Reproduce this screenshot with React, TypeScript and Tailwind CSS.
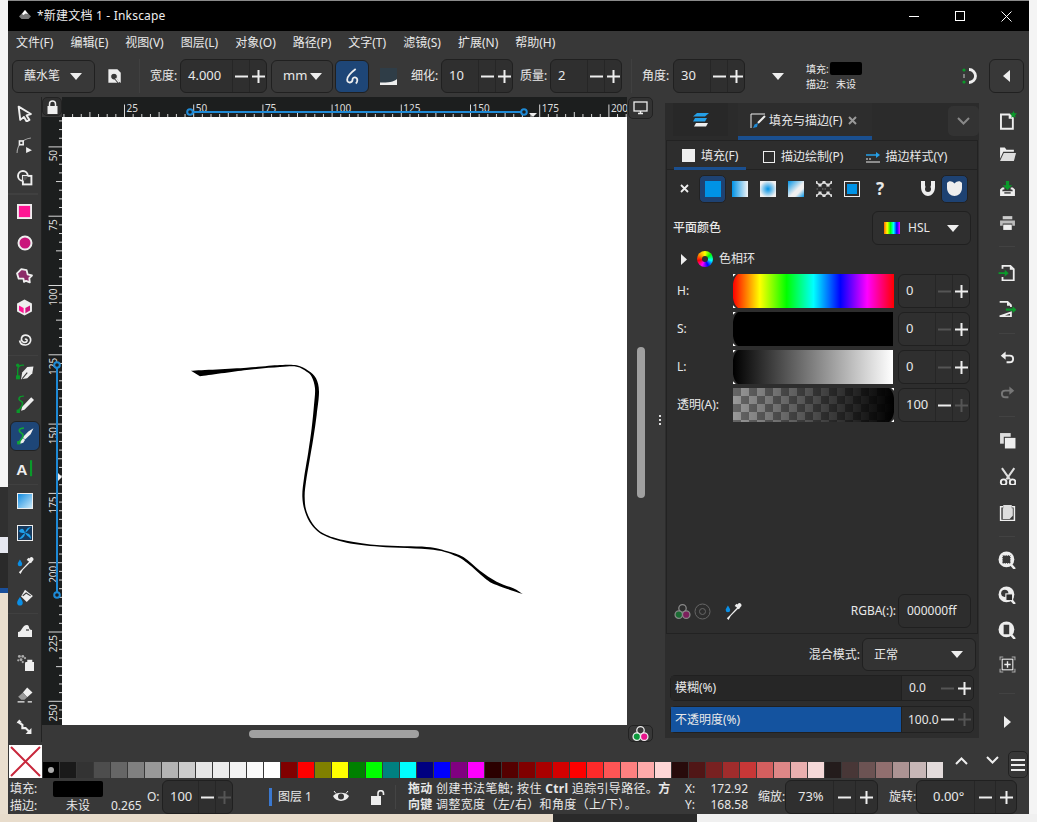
import React from "react";

const W = "#eeeeee";
const G = "#0a9a2a";

function S({ s = 16, children, className = "" }: { s?: number; children: React.ReactNode; className?: string }) {
  return (
    <svg width={s} height={s} viewBox="0 0 16 16" className={`block shrink-0 ${className}`}>
      {children}
    </svg>
  );
}

function Minus({ dim }: { dim?: boolean }) {
  return (
    <svg width="13" height="3" viewBox="0 0 13 3" className="block">
      <rect width="13" height="2" y=".5" fill={dim ? "#555" : W} />
    </svg>
  );
}
function Plus({ dim }: { dim?: boolean }) {
  return (
    <svg width="13" height="13" viewBox="0 0 13 13" className="block">
      <path d="M0 6.5H13M6.5 0V13" stroke={dim ? "#555" : W} strokeWidth="2" />
    </svg>
  );
}
function Tri({ className = "" }: { className?: string }) {
  return (
    <svg width="12" height="7" viewBox="0 0 12 7" className={`block shrink-0 ${className}`}>
      <path d="M0 0H12L6 7Z" fill={W} />
    </svg>
  );
}

function Spin({
  v,
  w,
  h = "h-[34px]",
  btn = "w-[17px]",
  minusDim,
  plusDim,
  ml = "",
  vp = "pl-[7px]",
}: {
  v: string;
  w: string;
  h?: string;
  btn?: string;
  minusDim?: boolean;
  plusDim?: boolean;
  ml?: string;
  vp?: string;
}) {
  return (
    <div className={`flex shrink-0 items-stretch rounded-[6px] border border-[#202020] bg-[#2f2f2f] ${w} ${h} ${ml}`}>
      <div className={`flex flex-1 items-center text-[13px] ${vp}`}>{v}</div>
      <div className={`flex items-center justify-center border-l border-[#262626] ${btn}`}>
        <Minus dim={minusDim} />
      </div>
      <div className={`flex items-center justify-center border-l border-[#262626] ${btn}`}>
        <Plus dim={plusDim} />
      </div>
    </div>
  );
}

function TopRuler() {
  const t: React.ReactNode[] = [];
  for (let i = -7; i <= 58; i++) {
    const x = 124.5 + i * 8.65;
    const major = i % 8 === 0;
    const len = major ? 12.5 : i % 4 === 0 ? 5 : 3;
    t.push(<line key={i} x1={x} x2={x} y1={117 - len} y2={117} stroke="#d8d8d8" strokeWidth="1" />);
    if (major)
      t.push(
        <text key={`t${i}`} x={x + 2} y={111.5} fontSize="10" fill="#dddddd">
          {25 + (i / 8) * 25}
        </text>
      );
  }
  return (
    <svg width="565" height="20" viewBox="62 97 565 20" className="block">
      {t}
      <line x1="190" x2="524" y1="112" y2="112" stroke="#1e8ad6" strokeWidth="2" />
      <circle cx="190" cy="112" r="2.8" fill="#1c1e1e" stroke="#1e8ad6" strokeWidth="2" />
      <circle cx="524" cy="112" r="2.8" fill="#1c1e1e" stroke="#1e8ad6" strokeWidth="2" />
      <path d="M529 113H537L533 117Z" fill="#eee" />
    </svg>
  );
}

function LeftRuler() {
  const t: React.ReactNode[] = [];
  for (let i = -27; i <= 43; i++) {
    const y = 354.8 + i * 8.6625;
    if (y < 118 || y > 725) continue;
    const major = i % 8 === 0;
    const len = major ? 13.5 : i % 4 === 0 ? 6 : 3;
    t.push(<line key={i} y1={y} y2={y} x1={62 - len} x2={62} stroke="#d8d8d8" strokeWidth="1" />);
    if (major)
      t.push(
        <text key={`t${i}`} x="57" y={y + 3} fontSize="10" fill="#dddddd" textAnchor="end" transform={`rotate(-90 57 ${y + 3})`}>
          {125 + (i / 8) * 25}
        </text>
      );
  }
  return (
    <svg width="20" height="608" viewBox="42 117 20 608" className="block shrink-0 bg-[#1c1e1e]">
      {t}
      <line x1="57" x2="57" y1="365" y2="595" stroke="#1e8ad6" strokeWidth="2" />
      <circle cx="57" cy="365" r="2.8" fill="#1c1e1e" stroke="#1e8ad6" strokeWidth="2" />
      <circle cx="57" cy="595" r="2.8" fill="#1c1e1e" stroke="#1e8ad6" strokeWidth="2" />
      <path d="M58 473V481L62 477Z" fill="#eee" />
    </svg>
  );
}

function smooth(p: number[][]) {
  let d = "";
  for (let i = 0; i < p.length - 1; i++) {
    const a = p[Math.max(0, i - 1)],
      b = p[i],
      c = p[i + 1],
      e = p[Math.min(p.length - 1, i + 2)];
    d += ` C${b[0] + (c[0] - a[0]) / 6} ${b[1] + (c[1] - a[1]) / 6} ${c[0] - (e[0] - b[0]) / 6} ${c[1] - (e[1] - b[1]) / 6} ${c[0]} ${c[1]}`;
  }
  return d;
}
const topEdge = [[33,47],[200,38],[300,30],[350,31],[385,47],[408,70],[417,110],[410,180],[400,250],[388,320],[378,380],[374,425],[380,470],[405,515],[440,540],[500,557],[600,571],[740,576],[800,588],[850,606],[900,647],[950,680],[1000,700],[1028,717]];
const botEdge = [[1028,717],[1000,708],[950,690],[920,674],[870,631],[830,604],[760,584],[600,575],[500,563],[430,540],[395,510],[375,470],[367,425],[372,370],[385,290],[395,220],[402,150],[405,100],[395,65],[380,50],[350,35],[300,36],[200,45],[60,64]];
const strokeD = `M33 47${smooth(topEdge)}${smooth(botEdge)}Z`;

const Ic = {
  select: <S s={17}><path d="M2.5 1.5L14 8.5L10 9.8L12.6 14L10 15.5L7.5 11.2L4 14Z" fill="#383838" stroke={W} strokeWidth="1.8" strokeLinejoin="round" /></S>,
  node: <S s={17}><path d="M1 15C1 8 6 2 14 1" stroke="#aaa" fill="none" /><rect x="2.5" y="3" width="5" height="5" fill={W} /><rect x="4" y="4.5" width="2" height="2" fill="#383838" /><path d="M9.5 9.5L15 12.5L9.5 15Z" fill={W} /></S>,
  shape: <S s={17}><circle cx="6.5" cy="6.5" r="4.6" fill="none" stroke={W} strokeWidth="1.8" /><rect x="6.5" y="6.5" width="8" height="8" fill="#383838" stroke={W} strokeWidth="1.8" /><path d="M6.5 11A4.6 4.6 0 0 0 11 6.5H6.5Z" fill="#555" /></S>,
  rect: <S s={15}><rect x="1" y="1" width="14" height="14" fill="#ff1493" stroke={W} strokeWidth="2" /></S>,
  circle: <S s={16}><circle cx="8" cy="8" r="6.5" fill="#c9177b" stroke={W} strokeWidth="2" /></S>,
  star: <S s={17}><path d="M5 2L10 3L11 7L15 8L12.5 10.5L13 14.5L9.5 13L7.5 14L7 11L2.5 11L1 6Z" fill="#8c2c68" stroke={W} strokeWidth="1.7" strokeLinejoin="round" /></S>,
  box: <S s={17}><path d="M8 .5L15 4.3V11.7L8 15.5L1 11.7V4.3Z" fill={W} /><path d="M2.8 6L7.2 8.5V13.3L2.8 10.8Z" fill="#ff1493" /><path d="M13.2 6L8.8 8.5V13.3L13.2 10.8Z" fill="#d01580" /></S>,
  spiral: <S s={16}><path d="M8 8.6c1-1 2.4 0 2 1.3c-.6 1.8-3.6 1.8-4.8.3c-1.6-2-.6-5 1.8-5.8c3-1 6 .8 6.6 3.6c.6 3-1.5 5.8-4.8 6c-3 .2-5.6-1.6-6.2-4.5" fill="none" stroke={W} strokeWidth="1.7" /></S>,
  pen: <S s={18}><path d="M15.5 3L10 3.5L5.5 8.5L4.5 14.5L10 13.5L14.5 9Z" fill={W} /><path d="M5.5 14L10 8.5" stroke="#383838" /><path d="M1.5 13V6C1.5 3 4 1.5 7 2" fill="none" stroke={G} strokeWidth="1.2" /><rect x="0" y="11" width="3.5" height="3.5" fill={G} /><circle cx="1.5" cy="2" r="1.5" fill={G} /></S>,
  pencil: <S s={18}><path d="M13.5 2L16 4.5L7.5 13L4.5 14L5.5 10.5Z" fill={W} /><path d="M7 1C2 1 1.5 4 4.5 5.5C7.5 7 5 11 2 14" fill="none" stroke={G} strokeWidth="1.3" /><rect x="0.5" y="13" width="3" height="3" fill={G} /></S>,
  callig: <S s={18}><path d="M15.5 1L11 4L6 9L8 11L13 6.5Z M6 9.5L4 11.5L3 15L6.5 14L8 11.5Z" fill={W} /><path d="M7 1C2 1 2 4 5 5.5C8 7 5 11 2 14" fill="none" stroke="#13a43a" strokeWidth="1.5" /><rect x="1" y="12.5" width="3" height="3" fill="#13a43a" /></S>,
  text: <S s={19}><text x="1" y="13.5" fontSize="13" fontWeight="700" fill={W} fontFamily="'Liberation Sans',sans-serif">A</text><rect x="12.6" y="1" width="1.8" height="13.5" fill={G} /></S>,
  grad: <S s={16}><defs><linearGradient id="gr1" x1="0" y1="0" x2="1" y2="1"><stop offset="0" stopColor="#0a88e0" /><stop offset="1" stopColor="#d0ecfa" /></linearGradient></defs><rect x=".5" y=".5" width="15" height="15" fill="url(#gr1)" stroke={W} /></S>,
  mesh: <S s={16}><rect x=".5" y=".5" width="15" height="15" fill="#173a5e" stroke={W} /><path d="M2 6C5 2 7 4 8 8C9 4 11 2 14 2C11 5 10 7 8 8C12 8 14 10 14 14C11 11 9 10 8 8C8 12 5 14 2 14C5 11 6 9 8 8C5 8 3 8 2 6Z" fill="#1ea0ea" /></S>,
  dropper: <S s={18}><path d="M3.5 3C2 5.5 1.5 6 1.5 7.2a2 2 0 0 0 4 0C5.500 6 5 5.5 3.500 3Z" fill="#0a8fe6" /><path d="M11 1.500L14.500 5L13 6.500L12.500 6L6 12.500L4 16L2.500 14.500L5.500 11.500L11.500 5L11 4.500L9.500 3.500Z" fill={W} /><path d="M13 1a2 2 0 0 1 2.500 2.500L14 5L11.500 2.500Z" fill={W} /></S>,
  bucket: <S s={18}><path d="M8 1.500L15 7L9.500 12.500L4.500 7.500Z" fill={W} /><path d="M6 7L9 4.500L13 7" stroke="#383838" fill="none" /><path d="M3.500 8C2 10.500 1 11.500 1 13a2.500 2.500 0 0 0 5 0C6 11.500 5 10.500 3.500 8Z" fill="#0a8fe6" /></S>,
  tweak: <S s={16}><path d="M1 15V10C5 10 5 3 10 3C13 3 11 8 15 8V15Z" fill={W} /><path d="M9 8h3" stroke="#383838" strokeWidth="1.2" /></S>,
  spray: <S s={18}><rect x="8" y="8" width="8.500" height="8.500" rx="1" fill={W} /><path d="M10 8V6h4.500v2Z" fill={W} /><g fill="#aaa"><circle cx="3" cy="3" r="1.300" /><circle cx="6" cy="3" r="1.300" /><circle cx="4.500" cy="6" r="1.300" /><circle cx="2" cy="6.500" r="1" /><circle cx="8" cy="4.500" r="1" /><circle cx="6" cy="8" r="1" /></g></S>,
  eraser: <S s={17}><path d="M10.500 1.500L15.500 6L10.500 10.500L6.500 6Z" fill={W} /><path d="M6.500 6L10.500 10.500L8 13H5L2 10Z" fill="#999" /><path d="M1.500 15H8M11 15H15" stroke={W} strokeWidth="1.2" /></S>,
  conn: <S s={17}><path d="M1.500 3.500L6 6.500V9.500H9L12.500 13" fill="none" stroke={W} strokeWidth="2" /><path d="M14.500 9.500V15H9Z" fill={W} /><path d="M.500 5L3 1.500L5.500 4Z" fill={W} /></S>,
  newDoc: <S s={19}><path d="M2.500 3H9.500L12.500 6V15H2.500Z" fill="#383838" stroke={W} strokeWidth="1.600" /><path d="M9 3V6.500H12.500Z" fill={W} /><path d="M13 0L13.900 1.900L16 2.200L14.400 3.600L14.800 5.600L13 4.600L11.200 5.600L11.600 3.600L10 2.200L12.100 1.900Z" fill={G} /></S>,
  open: <S s={17}><path d="M1 1.500H5.500L7 3.500H14V5.500H4L1 12Z" fill={W} /><path d="M4.500 6.500H16L14 14H1Z" fill="#ddd" /></S>,
  save: <S s={17}><path d="M1 9L3 7H5V9H3.500L3 10.500H13L12.500 9H11V7H13L15 9V15H1Z" fill={W} /><rect x="5" y="11.500" width="6" height="1.300" fill="#383838" /><path d="M6.500 1H9.500V5H12.500L8 9.500L3.500 5H6.500Z" fill={G} /></S>,
  print: <S s={17}><rect x="3.500" y="2" width="9" height="3" fill="#ccc" /><path d="M1 6H15V11H12.500V9H3.500V11H1Z" fill="#bbb" /><rect x="4" y="10" width="8" height="5" fill={W} /></S>,
  imp: <S s={18}><path d="M4 5V2.500H11L14 5.500V15.500H4V12.500" fill="none" stroke={W} strokeWidth="1.600" /><path d="M10.500 2.500V6H14Z" fill={W} /><path d="M0.500 8.200H6V6L9.500 9L6 12V9.800H0.500Z" fill={G} /></S>,
  exp: <S s={18}><path d="M1.500 2.500H8.500L11.500 5.500V7M11.500 12V15.500H1.500Z" fill="none" stroke={W} strokeWidth="1.600" /><path d="M8 2.500V6H11.500Z" fill={W} /><path d="M7 8.500H13V6.500L16.500 9.500L13 12.500V10.500H7Z" fill={G} /></S>,
  undo: <S s={15}><path d="M3 6H10.500C13 6 14 8 14 9.500C14 11.500 12.500 13 10 13H7" fill="none" stroke={W} strokeWidth="2" /><path d="M6 1.500V10.500L.8 6Z" fill={W} /></S>,
  redo: <S s={15}><path d="M13 6H5.500C3 6 2 8 2 9.500C2 11.500 3.500 13 6 13H9" fill="none" stroke="#777" strokeWidth="2" /><path d="M10 1.500V10.500L15.200 6Z" fill="#777" /></S>,
  dup: <S s={17}><rect x="1" y="1" width="10" height="10" fill="#ddd" /><rect x="5" y="5" width="11" height="11" fill={W} stroke="#383838" /></S>,
  cut: <S s={18}><path d="M3.500 1L10.500 11M14.500 1L7.500 11" stroke="#ddd" strokeWidth="1.800" /><circle cx="5" cy="13.500" r="2.500" fill="none" stroke={W} strokeWidth="1.700" /><circle cx="13" cy="13.500" r="2.500" fill="none" stroke={W} strokeWidth="1.700" /></S>,
  paste: <S s={17}><path d="M4 2.500H1.500V15.500H14.500V2.500H12" fill="none" stroke={W} strokeWidth="1.400" /><path d="M4 1H12V4H13V11L10 14H3.500V4H4Z" fill="#ddd" /></S>,
  zoomSel: <S s={18}><path d="M11.500 12L15 16" stroke={W} strokeWidth="2.200" /><circle cx="7.500" cy="7.500" r="7" fill={W} /><rect x="3.800" y="3.800" width="7.400" height="7.400" fill="#383838" stroke={W} strokeDasharray="1 1" /></S>,
  zoomDraw: <S s={18}><path d="M11.500 12L15 16" stroke={W} strokeWidth="2.200" /><circle cx="7.500" cy="7.500" r="7" fill={W} /><circle cx="6" cy="6.500" r="3.200" fill="#383838" /><rect x="7" y="7" width="6" height="6" fill="#2a2a2a" stroke={W} /></S>,
  zoomPage: <S s={18}><path d="M11.500 12L15 16" stroke={W} strokeWidth="2.200" /><circle cx="7.500" cy="7.500" r="7" fill={W} /><rect x="4.500" y="2.800" width="6" height="9.500" fill="#383838" stroke={W} /></S>,
  fit: <S s={17}><path d="M1 4V1H4M12 1H15V4M15 12V15H12M4 15H1V12" fill="none" stroke="#aaa" /><rect x="3" y="3" width="10" height="10" fill="none" stroke={W} /><path d="M5 8H11M8 5V11" stroke={W} strokeWidth="1.300" /></S>,
};

const leftTools: (keyof typeof Ic | "sep")[] = ["select","node","shape","sep","rect","circle","star","box","spiral","sep","pen","pencil","callig","text","sep","grad","mesh","dropper","bucket","sep","tweak","spray","eraser","conn"];

function RightBtn({ icon, h }: { icon: React.ReactNode; h: string }) {
  return <div className={`flex items-center justify-center ${h}`}>{icon}</div>;
}
function RightSep({ h }: { h: string }) {
  return (
    <div className={`flex items-center px-[14px] ${h}`}>
      <div className="h-px w-full bg-[#424242]" />
    </div>
  );
}

function Notch({ className }: { className: string }) {
  return (
    <svg width="5" height="10" viewBox="0 0 5 10" className={`absolute ${className}`}>
      <path d="M0 0H5Q1 3 0 10Z" fill="#2d2d2d" />
      <path d="M0 0H2.800L0 2.800Z" fill="#fff" />
    </svg>
  );
}

function SliderRow({ label, bar, w, v, alpha }: { label: string; bar: string; w: string; v: string; alpha?: boolean }) {
  return (
    <div className="flex h-[34px] items-center pl-[10px]">
      <div className="w-[56px] shrink-0 text-[12px]">{label}</div>
      <div className={`relative h-[34px] shrink-0 ${w} ${bar}`}>
        {alpha ? (
          <>
            <Notch className="right-0 top-0 -scale-x-100" />
            <Notch className="bottom-0 right-0 -scale-100" />
          </>
        ) : (
          <>
            <Notch className="left-0 top-0" />
            <Notch className="bottom-0 left-0 -scale-y-100" />
          </>
        )}
      </div>
      <div className={alpha ? "ml-[4px]" : w === "w-[161px]" ? "ml-[4px]" : "ml-[5px]"}>
        <Spin v={v} w="w-[72px]" minusDim={!alpha} plusDim={alpha} />
      </div>
    </div>
  );
}

const palette = ["#000000","#1a1a1a","#333333","#4d4d4d","#666666","#808080","#999999","#b3b3b3","#cccccc","#e6e6e6","#ececec","#f2f2f2","#f9f9f9","#ffffff","#800000","#ff0000","#808000","#ffff00","#008000","#00ff00","#008080","#00ffff","#000080","#0000ff","#800080","#ff00ff","#2b0000","#550000","#800000","#aa0000","#d40000","#ff0000","#ff2a2a","#ff5555","#ff8080","#ffaaaa","#ffd5d5","#280b0b","#501616","#782121","#a02c2c","#c83737","#d35f5f","#de8787","#e9afaf","#f4d7d7","#241c1c","#483737","#6c5353","#916f6f","#ac9393","#c8b7b7","#e3dbdb"];

const menus = ["文件(F)","编辑(E)","视图(V)","图层(L)","对象(O)","路径(P)","文字(T)","滤镜(S)","扩展(N)","帮助(H)"];

function ColorDots({ dim }: { dim?: boolean }) {
  return (
    <S s={17}>
      <circle cx="8" cy="5" r="3.500" fill="none" stroke={dim ? "#888" : W} strokeWidth="1.200" />
      <circle cx="4.500" cy="11" r="3.500" fill={dim ? "#1b6b33" : "#0c9a3c"} stroke={dim ? "#888" : W} strokeWidth="1.200" />
      <circle cx="11.500" cy="11" r="3.500" fill={dim ? "#7c1f5c" : "#e8148c"} stroke={dim ? "#888" : W} strokeWidth="1.200" />
    </S>
  );
}

export default function App() {
  return (
    <div lang="zh" className="flex h-[822px] w-[1037px] flex-col overflow-hidden bg-[#f2f2f2] font-['Noto_Sans','Noto_Sans_CJK_SC',sans-serif] text-[#e8e8e8]">
      <div className="flex h-[814px] shrink-0">
        {/* desktop strip, left */}
        <div className="flex w-2 shrink-0 flex-col">
          <div className="h-[487px] bg-[#f4f4f4]" />
          <div className="h-[50px] bg-[#303030]" />
          <div className="h-[16px] bg-[#e6e8f0]" />
          <div className="h-[35px] bg-[#2a2a2a]" />
          <div className="h-[5px] bg-[#1a4f9a]" />
          <div className="flex-1 bg-[#eadfcf]" />
        </div>

        {/* window */}
        <div className="flex w-[1021px] shrink-0 flex-col bg-[#383838]">
          {/* title */}
          <div className="flex h-[31px] shrink-0 items-center border-t border-[#8a8a8a] bg-black">
            <svg width="16" height="12" viewBox="0 0 16 12" className="ml-[9px] block shrink-0">
              <path d="M8 0L14 6.500L11.500 9H4.500L2 6.500Z" fill="#777" />
              <path d="M8 0L11 4L8.500 3.500L6.500 5L5 4Z" fill="#fff" />
            </svg>
            <div className="ml-[4px] text-[12px] leading-none tracking-[.2px] text-[#eeeeee]">*新建文档 1 - Inkscape</div>
            <div className="ml-auto flex h-full">
              <div className="flex w-[46px] items-center justify-center">
                <div className="h-px w-[10px] bg-white" />
              </div>
              <div className="flex w-[46px] items-center justify-center">
                <div className="h-[10px] w-[10px] border border-white" />
              </div>
              <div className="flex w-[46px] items-center justify-center">
                <svg width="11" height="11" viewBox="0 0 11 11" className="block">
                  <path d="M.5 .5L10.500 10.500M10.500 .5L.5 10.500" stroke="#fff" />
                </svg>
              </div>
            </div>
          </div>

          {/* menu */}
          <div className="flex h-[24px] shrink-0 items-center gap-[17px] pl-[8px] text-[12px]">
            {menus.map((m) => (
              <span key={m} className="whitespace-nowrap">{m}</span>
            ))}
          </div>

          {/* tool controls */}
          <div className="flex h-[42px] shrink-0 items-center whitespace-nowrap text-[12px]">
            <div className="ml-[4px] flex h-[33px] w-[83px] shrink-0 items-center justify-between rounded-[6px] border border-[#202020] pl-[11px] pr-[12px]">
              <span>蘸水笔</span>
              <Tri />
            </div>
            <S s={18} className="ml-[10px]">
              <path d="M3 2H11L14 5V14H3Z" fill={W} />
              <circle cx="8" cy="8.500" r="3" fill="#383838" stroke={W} />
              <path d="M9 10L13 15" stroke="#383838" strokeWidth="2" />
              <path d="M9.500 10L12.500 13.500" stroke={W} strokeWidth="1.300" />
            </S>
            <div className="ml-[16px] h-[34px] w-px shrink-0 bg-[#404040]" />
            <span className="ml-[10px] w-[28px] shrink-0">宽度:</span>
            <Spin v="4.000" w="w-[87px]" ml="ml-[2px]" />
            <div className="ml-[4px] flex h-[33px] w-[62px] shrink-0 items-center justify-between rounded-[6px] border border-[#202020] pl-[11px] pr-[10px] text-[13px]">
              <span>mm</span>
              <Tri />
            </div>
            <div className="ml-[2px] flex h-[33px] w-[34px] shrink-0 items-center justify-center rounded-[6px] border border-[#202020] bg-[#1e4677]">
              <S s={17}>
                <path d="M11 1C7 4 3 7 3 11C3 15 8 14 8 11C8 8 13 8 12.500 12C12.400 13 12 14 11 14.500" fill="none" stroke={W} strokeWidth="1.700" />
              </S>
            </div>
            <svg width="17" height="17" viewBox="0 0 17 17" className="ml-[11px] block shrink-0">
              <rect width="17" height="17" fill="#2f3d47" />
              <path d="M0 17V14.500C8 14.500 14 14 17 11V17Z" fill="#eee" />
            </svg>
            <span className="ml-[14px] w-[28px] shrink-0">细化:</span>
            <Spin v="10" w="w-[72px]" ml="ml-[2px]" />
            <span className="ml-[7px] w-[28px] shrink-0">质量:</span>
            <Spin v="2" w="w-[72px]" ml="ml-[2px]" />
            <div className="ml-[9px] h-[34px] w-px shrink-0 bg-[#404040]" />
            <span className="ml-[10px] w-[28px] shrink-0">角度:</span>
            <Spin v="30" w="w-[72px]" ml="ml-[3px]" />
            <Tri className="ml-[27px]" />
            <div className="ml-[22px] flex w-[56px] shrink-0 flex-col text-[10px] leading-none">
              <div className="flex h-[14px] items-center">
                <span className="w-[24px]">填充:</span>
                <div className="h-[13px] w-[32px] rounded-[2px] bg-black" />
              </div>
              <div className="mt-[1px] flex h-[14px] items-center">
                <span className="w-[30px]">描边:</span>
                <span>未设</span>
              </div>
            </div>
            <svg width="18" height="18" viewBox="0 0 18 18" className="ml-[98px] block shrink-0">
              <path d="M9 2.500A6.500 6.500 0 0 1 9 15.500" fill="none" stroke={W} strokeWidth="2.800" />
              <circle cx="4" cy="3" r="1.600" fill={G} />
              <circle cx="4" cy="15" r="1.600" fill={G} />
              <path d="M3 8h2M3 10h2" stroke={W} strokeWidth=".8" />
            </svg>
            <div className="ml-[11px] flex h-[34px] w-[35px] shrink-0 items-center justify-center rounded-[6px] border border-[#202020]">
              <svg width="7" height="12" viewBox="0 0 7 12" className="block">
                <path d="M7 0V12L0 6Z" fill={W} />
              </svg>
            </div>
          </div>

          {/* main */}
          <div className="flex h-[646px] shrink-0">
            {/* left toolbar */}
            <div className="h-[645px] w-[34px] shrink-0 border-r border-[#222222]">
              {leftTools.map((t, i) =>
                t === "sep" ? (
                  <div key={i} className={`mr-[3px] bg-[#404040] ${i === 3 ? "h-[2px]" : "h-px"}`} />
                ) : (
                  <div key={i} className="flex h-[32px] items-center justify-center">
                    <div className={`flex h-[30px] w-[30px] items-center justify-center rounded-[6px] ${t === "callig" ? "border border-[#222] bg-[#1e4677]" : ""}`}>
                      {Ic[t]}
                    </div>
                  </div>
                )
              )}
            </div>

            {/* canvas column */}
            <div className="flex w-[613px] shrink-0 flex-col">
              <div className="flex h-[20px] shrink-0">
                <div className="flex h-[19px] w-[20px] shrink-0 items-center justify-center rounded-[5px] border border-[#222] bg-[#2f2f2f]">
                  <svg width="11" height="14" viewBox="0 0 11 14" className="block">
                    <path d="M2.500 6V4A3 3 0 0 1 8.500 4V6" fill="none" stroke={W} strokeWidth="1.500" />
                    <rect x=".5" y="6" width="10" height="8" fill={W} />
                  </svg>
                </div>
                <div className="h-[20px] w-[565px] shrink-0 bg-[#1c1e1e]">
                  <TopRuler />
                </div>
                <div className="ml-px flex h-[22px] w-[25px] shrink-0 items-center justify-center rounded-[5px] border border-[#222] bg-[#333]">
                  <svg width="15" height="14" viewBox="0 0 15 14" className="block">
                    <rect x="1" y="1" width="13" height="9" fill="none" stroke={W} strokeWidth="1.300" />
                    <path d="M5 12.500H10M7.500 10V12.500" stroke={W} strokeWidth="1.500" />
                  </svg>
                </div>
              </div>
              <div className="flex h-[608px] shrink-0">
                <LeftRuler />
                <div className="h-[608px] w-[565px] shrink-0 bg-white">
                  <svg width="565" height="608" viewBox="62 117 565 608" className="block">
                    <g transform="translate(180 355) scale(.33333)">
                      <path d={strokeD} fill="#000" />
                    </g>
                  </svg>
                </div>
                <div className="flex w-[28px] shrink-0 justify-center pt-[230px]">
                  <div className="h-[151px] w-[8px] rounded-full bg-[#a0a0a0]" />
                </div>
              </div>
              <div className="flex h-[18px] shrink-0 items-start">
                <div className="ml-[207px] mt-[5px] h-[8px] w-[170px] rounded-full bg-[#a0a0a0]" />
                <div className="ml-[209px] flex h-[17px] w-[25px] shrink-0 items-center justify-center rounded-[5px] border border-[#222]">
                  <ColorDots />
                </div>
              </div>
            </div>

            {/* pane handle */}
            <div className="flex w-[10px] shrink-0 flex-col items-center justify-center gap-[2px]">
              <div className="h-[2px] w-[2px] bg-[#ddd]" />
              <div className="h-[2px] w-[2px] bg-[#ddd]" />
              <div className="h-[2px] w-[2px] bg-[#ddd]" />
            </div>

            {/* dialogs */}
            <div className="mt-[6px] flex h-[635px] w-[314px] shrink-0 flex-col bg-[#2d2d2d]">
              <div className="flex h-[37px] shrink-0 bg-[#2b2b2b]">
                <div className="ml-[8px] flex h-[33px] w-[55px] items-center justify-center bg-[#282828]">
                  <svg width="16" height="14" viewBox="0 0 16 14" className="block">
                    <path d="M4 0H16L12 3.500H0Z" fill="#25a0e8" />
                    <path d="M2 5H14L12 8.500H0Z" fill="#25a0e8" />
                    <path d="M3 10H15L13 13.500H1Z" fill={W} />
                  </svg>
                </div>
                <div className="ml-[10px] flex h-[37px] w-[134px] items-center border-b-[4px] border-[#1a4f8f] bg-[#2d2d2d] pl-[12px] pt-[2px] text-[12px]">
                  <S s={16}>
                    <path d="M15 1H1V15" fill="none" stroke={W} />
                    <path d="M15 3L8 10" stroke={W} strokeWidth="2" />
                    <path d="M8 10L4.500 11.500L3 15L7 14Z" fill="#1e8ad6" />
                  </S>
                  <span className="ml-[3px] whitespace-nowrap">填充与描边(F)</span>
                  <svg width="9" height="9" viewBox="0 0 9 9" className="ml-[6px] block shrink-0">
                    <path d="M1 1L8 8M8 1L1 8" stroke="#999" strokeWidth="2" />
                  </svg>
                </div>
                <div className="ml-auto mt-[3px] flex h-[30px] w-[31px] items-center justify-center rounded-[5px] bg-[#333]">
                  <svg width="13" height="8" viewBox="0 0 13 8" className="block">
                    <path d="M1 1L6.500 6.500L12 1" fill="none" stroke="#888" strokeWidth="2" />
                  </svg>
                </div>
              </div>

              {/* frame */}
              <div className="ml-px mr-px flex h-[494px] shrink-0 flex-col border border-[#222]">
                <div className="flex h-[29px] shrink-0 border-b border-[#222] text-[12px]">
                  <div className="ml-[7px] flex h-[29px] w-[72px] items-center border-b-[3px] border-[#1a4f8f] pl-[8px] pt-[3px]">
                    <div className="h-[13px] w-[13px] bg-[#eee]" />
                    <span className="ml-[6px]">填充(F)</span>
                  </div>
                  <div className="ml-[17px] flex items-center pt-[3px]">
                    <div className="h-[12px] w-[12px] border border-[#eee]" />
                    <span className="ml-[6px]">描边绘制(P)</span>
                  </div>
                  <div className="ml-[23px] flex items-center pt-[3px]">
                    <svg width="14" height="12" viewBox="0 0 14 12" className="block">
                      <path d="M0 4H10" stroke="#25a0e8" strokeWidth="1.500" />
                      <path d="M10 1L14 4L10 7Z" fill="#25a0e8" />
                      <path d="M0 8H5" stroke={W} strokeDasharray="2 1" />
                      <path d="M0 11H14" stroke={W} />
                    </svg>
                    <span className="ml-[5px]">描边样式(Y)</span>
                  </div>
                </div>

                {/* paint modes */}
                <div className="mt-[3px] flex h-[31px] shrink-0 items-center">
                  <svg width="9" height="9" viewBox="0 0 9 9" className="ml-[13px] block shrink-0">
                    <path d="M1 1L8 8M8 1L1 8" stroke={W} strokeWidth="1.800" />
                  </svg>
                  <div className="ml-[10px] flex h-[28px] w-[27px] shrink-0 items-center justify-center rounded-[5px] border border-[#222] bg-[#1e4272]">
                    <div className="h-[16px] w-[16px] bg-[#0093e6]" />
                  </div>
                  <div className="ml-[6px] h-[16px] w-[16px] shrink-0 bg-[linear-gradient(to_right,#0093e6,#f4f4f4)]" />
                  <div className="ml-[12px] h-[16px] w-[16px] shrink-0 bg-[radial-gradient(circle,#0093e6,#f0f0f0_75%)]" />
                  <div className="ml-[12px] h-[16px] w-[16px] shrink-0 bg-[linear-gradient(135deg,#0093e6,#f0f0f0_55%,#f0f0f0_70%,#0093e6)]" />
                  <svg width="16" height="16" viewBox="0 0 16 16" className="ml-[12px] block shrink-0">
                    <rect width="16" height="16" fill="#ddd" />
                    <g fill="#2d2d2d">
                      <circle cx="0" cy="5.300" r="2.600" />
                      <circle cx="8" cy="5.300" r="2.600" />
                      <circle cx="16" cy="5.300" r="2.600" />
                      <circle cx="0" cy="10.700" r="2.600" />
                      <circle cx="8" cy="10.700" r="2.600" />
                      <circle cx="16" cy="10.700" r="2.600" />
                      <circle cx="4" cy="0" r="2.600" />
                      <circle cx="12" cy="0" r="2.600" />
                      <circle cx="4" cy="8" r="2.600" />
                      <circle cx="12" cy="8" r="2.600" />
                      <circle cx="4" cy="16" r="2.600" />
                      <circle cx="12" cy="16" r="2.600" />
                    </g>
                  </svg>
                  <div className="ml-[12px] flex h-[16px] w-[16px] shrink-0 items-center justify-center border border-[#eee]">
                    <div className="h-[10px] w-[10px] bg-[#0093e6]" />
                  </div>
                  <span className="ml-[12px] w-[16px] text-center text-[17px] font-bold leading-none">?</span>
                  <svg width="16" height="17" viewBox="0 0 16 17" className="ml-[32px] block shrink-0">
                    <path d="M1 1H5V5C5 9 11 9 11 5V1H15V7C15 13 11 16 8 16C5 16 1 13 1 7Z" fill={W} />
                    <circle cx="8" cy="9" r="3" fill="#2d2d2d" />
                  </svg>
                  <div className="ml-[5px] flex h-[28px] w-[27px] shrink-0 items-center justify-center rounded-[5px] border border-[#222] bg-[#1e4272]">
                    <svg width="17" height="17" viewBox="0 0 17 17" className="block">
                      <path d="M1 3C3 .5 6 1 8.500 3.500C11 1 14 .5 16 3V8C16 13 12 16 8.500 16C5 16 1 13 1 8Z" fill={W} />
                    </svg>
                  </div>
                </div>

                {/* flat colour */}
                <div className="mt-[7px] flex h-[34px] shrink-0 items-center pl-[6px]">
                  <span className="text-[12px] font-medium">平面颜色</span>
                  <div className="ml-auto mr-[6px] flex h-[34px] w-[99px] items-center rounded-[6px] border border-[#202020] bg-[#2f2f2f] pl-[11px] pr-[11px] text-[12px]">
                    <div className="h-[12px] w-[16px] shrink-0 bg-[linear-gradient(to_right,#f60,#ff0,#0f0,#0ff,#00f,#f0f)]" />
                    <span className="ml-[8px]">HSL</span>
                    <Tri className="ml-auto" />
                  </div>
                </div>

                <div className="mt-[5px] flex h-[18px] shrink-0 items-center pl-[14px] text-[12px]">
                  <svg width="6" height="11" viewBox="0 0 6 11" className="block shrink-0">
                    <path d="M0 0L6 5.500L0 11Z" fill={W} />
                  </svg>
                  <div className="ml-[10px] flex h-[16px] w-[16px] shrink-0 items-center justify-center rounded-full bg-[conic-gradient(#ff0,#0f0,#0ff,#00f,#f0f,#f00,#f90,#ff0)]">
                    <div className="h-[6px] w-[6px] rounded-full bg-[#2d2d2d]" />
                  </div>
                  <span className="ml-[6px]">色相环</span>
                </div>

                <div className="mt-[6px] flex flex-col gap-[4px]">
                  <SliderRow label="H:" w="w-[161px]" v="0" bar="bg-[linear-gradient(to_right,#f00,#ff0,#0f0,#0ff,#00f,#f0f,#f00)]" />
                  <SliderRow label="S:" w="w-[160px]" v="0" bar="bg-black" />
                  <SliderRow label="L:" w="w-[160px]" v="0" bar="bg-[linear-gradient(to_right,#000,#fff)]" />
                  <SliderRow label="透明(A):" w="w-[161px]" v="100" alpha bar="bg-[linear-gradient(to_right,transparent,#000),conic-gradient(#999_25%,#666_0_50%,#999_0_75%,#666_0)] bg-[length:100%_100%,16px_16px]" />
                </div>

                <div className="mb-[5px] mt-auto flex h-[34px] shrink-0 items-center pl-[7px]">
                  <ColorDots dim />
                  <svg width="17" height="17" viewBox="0 0 17 17" className="ml-[3px] block shrink-0">
                    <circle cx="8.500" cy="8.500" r="7.500" fill="none" stroke="#666" />
                    <circle cx="8.500" cy="8.500" r="3" fill="none" stroke="#666" />
                  </svg>
                  <div className="ml-[13px]">{Ic.dropper}</div>
                  <span className="ml-auto whitespace-nowrap text-[12px]">RGBA(:):</span>
                  <div className="ml-[2px] mr-[6px] flex h-[34px] w-[73px] items-center rounded-[6px] border border-[#202020] pl-[8px] text-[12px]">
                    000000ff
                  </div>
                </div>
              </div>

              {/* blend */}
              <div className="mt-[4px] flex h-[33px] shrink-0 items-center justify-end pr-[3px] text-[12px]">
                <span>混合模式:</span>
                <div className="ml-[2px] flex h-[33px] w-[114px] items-center rounded-[6px] border border-[#202020] bg-[#333] pl-[11px] pr-[12px]">
                  <span>正常</span>
                  <Tri className="ml-auto" />
                </div>
              </div>

              <div className="ml-[5px] mt-[4px] flex h-[26px] w-[304px] shrink-0 items-stretch rounded-[5px] border border-[#202020] text-[12px]">
                <div className="flex w-[231px] items-center border-r border-[#202020] bg-[#262626] pl-[4px]">模糊(%)</div>
                <div className="flex flex-1 items-center pl-[7px]">0.0</div>
                <div className="flex w-[16px] items-center justify-center"><Minus dim /></div>
                <div className="flex w-[18px] items-center justify-center"><Plus /></div>
              </div>
              <div className="ml-[5px] mt-[5px] flex h-[27px] w-[304px] shrink-0 items-stretch rounded-[5px] border border-[#202020] text-[12px]">
                <div className="flex w-[231px] items-center border-r border-[#202020] bg-[#14539f] pl-[4px]">不透明度(%)</div>
                <div className="flex flex-1 items-center pl-[6px]">100.0</div>
                <div className="flex w-[16px] items-center justify-center"><Minus /></div>
                <div className="flex w-[18px] items-center justify-center"><Plus dim /></div>
              </div>
            </div>

            {/* right toolbar */}
            <div className="w-[50px] shrink-0 pl-[6px] pt-[6px]">
              <RightBtn h="h-[34px]" icon={Ic.newDoc} />
              <RightBtn h="h-[34px]" icon={Ic.open} />
              <RightBtn h="h-[34px]" icon={Ic.save} />
              <RightBtn h="h-[34px]" icon={Ic.print} />
              <RightSep h="h-[15px]" />
              <RightBtn h="h-[36px]" icon={Ic.imp} />
              <RightBtn h="h-[36px]" icon={Ic.exp} />
              <RightSep h="h-[14px]" />
              <RightBtn h="h-[35px]" icon={Ic.undo} />
              <RightBtn h="h-[35px]" icon={Ic.redo} />
              <RightSep h="h-[12px]" />
              <RightBtn h="h-[36px]" icon={Ic.dup} />
              <RightBtn h="h-[36px]" icon={Ic.cut} />
              <RightBtn h="h-[36px]" icon={Ic.paste} />
              <RightSep h="h-[12px]" />
              <RightBtn h="h-[35px]" icon={Ic.zoomSel} />
              <RightBtn h="h-[35px]" icon={Ic.zoomDraw} />
              <RightBtn h="h-[35px]" icon={Ic.zoomPage} />
              <RightBtn h="h-[35px]" icon={Ic.fit} />
              <RightSep h="h-[22px]" />
              <RightBtn
                h="h-[36px]"
                icon={
                  <svg width="7" height="12" viewBox="0 0 7 12" className="block">
                    <path d="M0 0V12L7 6Z" fill={W} />
                  </svg>
                }
              />
            </div>
          </div>

          {/* palette */}
          <div className="flex h-[37px] shrink-0 items-start">
            <svg width="33" height="33" viewBox="0 0 33 33" className="ml-px mt-[2px] block shrink-0 bg-white">
              <path d="M2 2L31 31M31 2L2 31" stroke="#c8283c" strokeWidth="2" />
            </svg>
            <div className="ml-px mt-[19px] flex gap-px">
              {palette.map((c, i) => (
                <div key={i} className="flex h-[16px] w-[16px] shrink-0 items-center justify-center" style={{ background: c }}>
                  {i === 0 && <div className="h-[6px] w-[6px] rounded-full bg-[#aaa]" />}
                </div>
              ))}
            </div>
            <svg width="13" height="8" viewBox="0 0 13 8" className="ml-[12px] mt-[14px] block shrink-0">
              <path d="M1 7L6.500 1.500L12 7" fill="none" stroke={W} strokeWidth="2" />
            </svg>
            <svg width="13" height="8" viewBox="0 0 13 8" className="ml-[18px] mt-[13px] block shrink-0">
              <path d="M1 1L6.500 6.500L12 1" fill="none" stroke={W} strokeWidth="2" />
            </svg>
            <div className="ml-[9px] mt-[8px] flex h-[27px] w-[20px] shrink-0 flex-col items-center justify-center gap-[3px] rounded-[5px] border border-[#222]">
              <div className="h-[2px] w-[14px] bg-[#eee]" />
              <div className="h-[2px] w-[14px] bg-[#eee]" />
              <div className="h-[2px] w-[14px] bg-[#eee]" />
            </div>
          </div>

          {/* status */}
          <div className="flex h-[34px] shrink-0 items-center whitespace-nowrap text-[12px]">
            <div className="ml-[2px] flex w-[137px] shrink-0 flex-col">
              <div className="flex h-[17px] items-center">
                <span className="w-[43px]">填充:</span>
                <div className="h-[16px] w-[50px] rounded-[2px] bg-black" />
              </div>
              <div className="flex h-[17px] items-center">
                <span className="w-[56px]">描边:</span>
                <span className="w-[45px]">未设</span>
                <span>0.265</span>
              </div>
            </div>
            <span className="w-[15px] shrink-0">O:</span>
            <Spin v="100" w="w-[71px]" minusDim={false} plusDim />
            <div className="ml-[36px] h-[18px] w-[3px] shrink-0 bg-[#3a78d0]" />
            <span className="ml-[6px] w-[34px] shrink-0">图层 1</span>
            <svg width="18" height="14" viewBox="0 0 18 14" className="ml-[20px] block shrink-0">
              <path d="M1 6C4 1.500 14 1.500 17 6C14 12.500 4 12.500 1 6Z" fill={W} />
              <circle cx="9" cy="6.500" r="3" fill="#383838" />
              <path d="M2 1L4 3.500M16 1L14 3.500" stroke={W} />
            </svg>
            <svg width="16" height="15" viewBox="0 0 16 15" className="ml-[20px] block shrink-0">
              <rect x="1" y="6" width="10" height="9" fill={W} />
              <path d="M8 6V3.500A2.700 2.700 0 0 1 13.500 3.500V5" fill="none" stroke={W} strokeWidth="1.600" />
            </svg>
            <div className="ml-[9px] h-[24px] w-px shrink-0 bg-[#444]" />
            <div className="ml-[12px] flex w-[270px] shrink-0 flex-col text-[12px] leading-[16px] tracking-[.33px]">
              <div><b>拖动</b> 创建书法笔触; 按住 <b>Ctrl</b> 追踪引导路径。<b>方</b></div>
              <div><b>向键</b> 调整宽度（左/右）和角度（上/下）。</div>
            </div>
            <div className="ml-[7px] flex w-[63px] shrink-0 flex-col leading-[16px]">
              <div className="flex justify-between"><span>X:</span><span>172.92</span></div>
              <div className="flex justify-between"><span>Y:</span><span>168.58</span></div>
            </div>
            <span className="ml-[10px] w-[27px] shrink-0">缩放:</span>
            <Spin v="73%" w="w-[93px]" btn="w-[22px]" vp="pl-[12px]" />
            <span className="ml-[11px] w-[27px] shrink-0">旋转:</span>
            <Spin v="0.00°" w="w-[101px]" btn="w-[21px]" vp="pl-[16px]" />
          </div>
        </div>

        {/* desktop strip, right */}
        <div className="flex-1 bg-[#f4f4f4]" />
      </div>

      {/* desktop strip, bottom */}
      <div className="flex flex-1">
        <div className="w-[553px] shrink-0 bg-[#e8dccb]" />
        <div className="w-[144px] shrink-0 bg-[#2a2a2a]" />
        <div className="flex-1 bg-[#f0f0f0]" />
      </div>
    </div>
  );
}
